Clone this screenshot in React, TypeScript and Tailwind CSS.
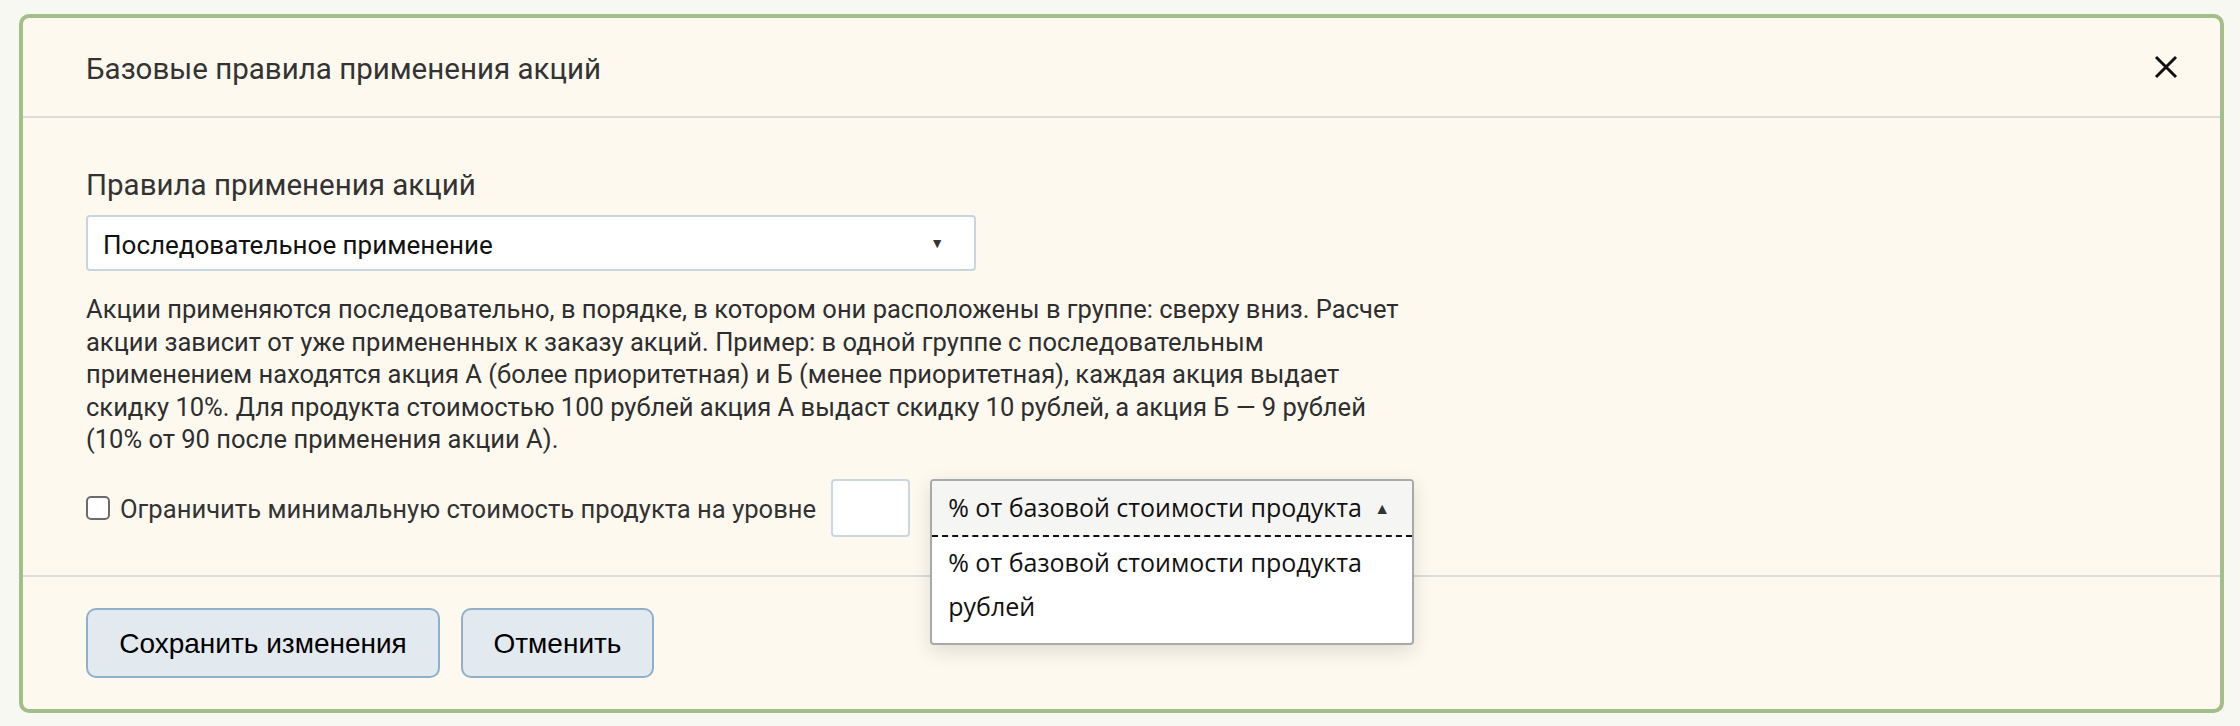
import React from 'react'

const pt = "font-['Roboto','Noto_Sans',sans-serif]"

const descLines = [
  'Акции применяются последовательно, в порядке, в котором они расположены в группе: сверху вниз. Расчет',
  'акции зависит от уже примененных к заказу акций. Пример: в одной группе с последовательным',
  'применением находятся акция А (более приоритетная) и Б (менее приоритетная), каждая акция выдает',
  'скидку 10%. Для продукта стоимостью 100 рублей акция А выдаст скидку 10 рублей, а акция Б — 9 рублей',
  '(10% от 90 после применения акции А).',
]

export default function App() {
  return (
    <div className="min-h-screen bg-[#f8f8f3] pt-[14px] pl-[19px] pr-[16px]">
      <div className={`w-[2205px] rounded-[10px] border-4 border-[#a4be8a] bg-[#fdf9ee] ${pt}`}>
        {/* Header */}
        <div className="flex h-[100px] items-center justify-between border-b-2 border-[#dcdcd8] pl-[63px] pr-[42px]">
          <h1 className="mt-[5px] text-[29.5px] text-[#333]">Базовые правила применения акций</h1>
          <button className="flex h-[24px] w-[24px] items-center justify-center">
            <svg width="24" height="24" viewBox="0 0 24 24">
              <path d="M2 2 L22 22 M22 2 L2 22" stroke="#111" strokeWidth="3" />
            </svg>
          </button>
        </div>

        {/* Body */}
        <div className="pl-[63px] pt-[47px] pb-[38px]">
          <div className="text-[29.5px] leading-[40px] text-[#333]">Правила применения акций</div>
          <div className="mt-[10px] flex h-[56px] w-[890px] items-center justify-between rounded-[4px] border-2 border-[#c8d5e1] bg-white pl-[15px] pr-[30px]">
            <span className="pt-[5px] text-[26px] text-[#111]">Последовательное применение</span>
            <span className="text-[14px] text-[#333]">▼</span>
          </div>
          <div className="mt-[22px] text-[25.5px] leading-[32.5px] text-[#2e2e2e]">
            {descLines.map((l) => (
              <div key={l} className="whitespace-nowrap">{l}</div>
            ))}
          </div>
          <div className="mt-[23px] flex h-[58px] items-center">
            <span className="h-[24px] w-[24px] rounded-[5px] border-2 border-[#6b6b6b] bg-white" />
            <span className="ml-[10px] pt-[3px] text-[25.6px] text-[#333]">Ограничить минимальную стоимость продукта на уровне</span>
            <span className="ml-[15px] h-[58px] w-[79px] rounded-[4px] border-2 border-[#cad7e3] bg-white" />
            <div className="relative ml-[20px] h-[58px] w-[484px]">
              <div className="absolute left-0 top-0 z-10 w-[484px] overflow-hidden rounded-[4px] border-2 border-[#a9a9a9] bg-white shadow-[0_6px_20px_rgba(0,0,0,0.12)] font-['Open_Sans','Noto_Sans',sans-serif]">
                <div className="flex h-[56px] items-center justify-between border-b-2 border-dashed border-[#111] bg-[#f5f6f3] pl-[16px] pr-[22px]">
                  <span className="text-[25px] text-[#111]">% от базовой стоимости продукта</span>
                  <span className="text-[16px] text-[#333]">▲</span>
                </div>
                <div className="pb-[14px] pt-[4px]">
                  <div className="flex h-[44px] items-center pl-[16px] text-[25px] text-[#111]">% от базовой стоимости продукта</div>
                  <div className="flex h-[44px] items-center pl-[16px] text-[25px] text-[#111]">рублей</div>
                </div>
              </div>
            </div>
          </div>
        </div>

        {/* Footer */}
        <div className="flex gap-[21px] border-t-2 border-[#dcdcd8] pl-[63px] pt-[31px] pb-[31px] font-['Liberation_Sans',Arial,sans-serif]">
          <button className="h-[70px] w-[354px] rounded-[10px] border-2 border-[#8fb0c8] bg-[#e2e9ef] pt-[3px] text-[28px] text-black">
            Сохранить изменения
          </button>
          <button className="h-[70px] w-[193px] rounded-[10px] border-2 border-[#8fb0c8] bg-[#e2e9ef] pt-[3px] text-[28px] text-black">
            Отменить
          </button>
        </div>
      </div>
    </div>
  )
}
